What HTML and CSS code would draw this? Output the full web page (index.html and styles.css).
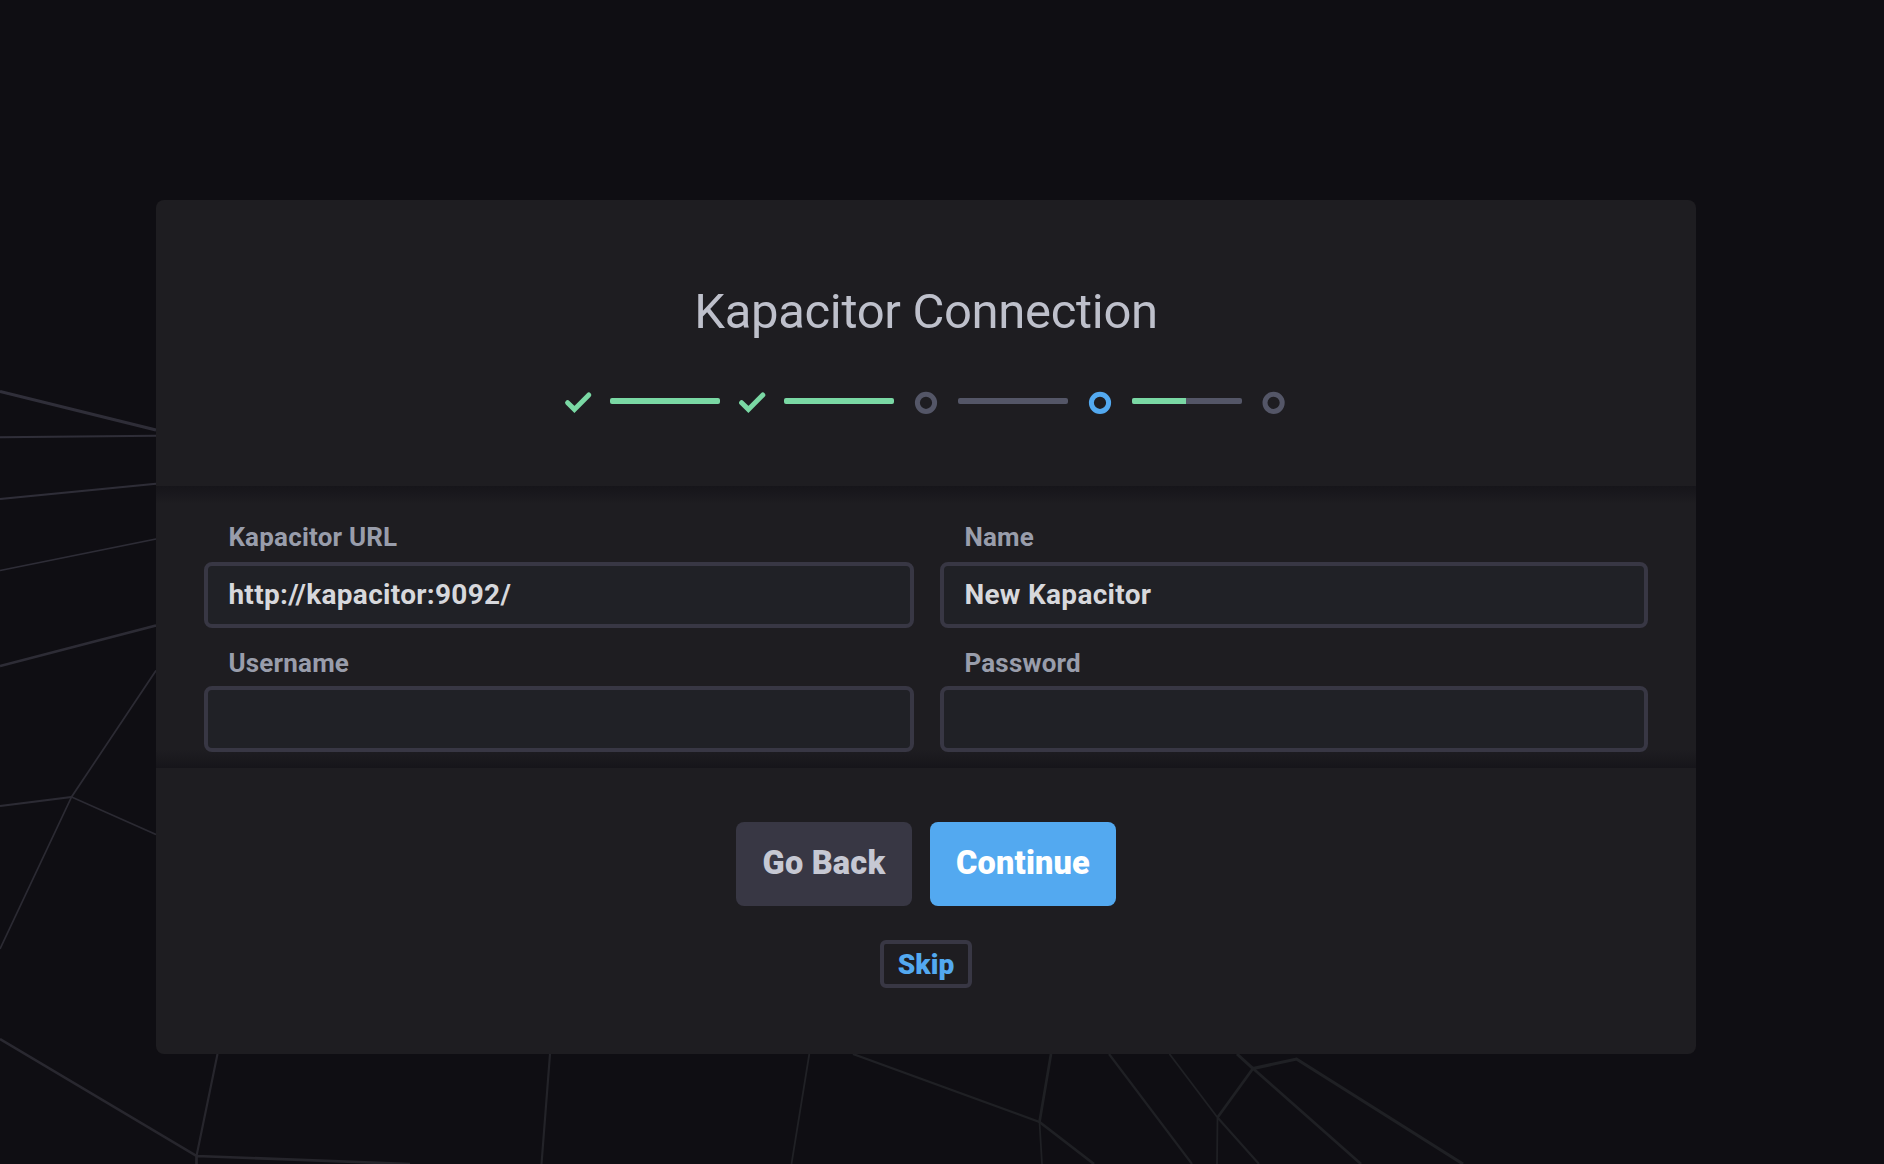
FILE: index.html
```html
<!DOCTYPE html>
<html lang="en">
<head>
<meta charset="utf-8">
<title>Kapacitor Connection</title>
<link rel="stylesheet" href="styles.css">
</head>
<body>
<svg class="backdrop" viewBox="0 0 1884 1164" aria-hidden="true">
  <defs>
    <linearGradient id="web" gradientUnits="userSpaceOnUse" x1="0" y1="400" x2="900" y2="1164">
      <stop offset="0" stop-color="#302f3a"/>
      <stop offset="0.5" stop-color="#27262d"/>
      <stop offset="1" stop-color="#1f2024"/>
    </linearGradient>
  </defs>
  <g fill="none" stroke="url(#web)">
    <path stroke-width="3" d="M0 391.5L156 430M1237 1054L1253 1068.5L1296.5 1059L1463 1164"/>
    <path stroke-width="2.6" d="M0 666L156 625.5M0 1039L196.5 1156V1164M196.5 1156L410 1164M1051 1054L1039.5 1122L1094 1164M1217.5 1117.5L1253 1068.5L1361 1164"/>
    <path stroke-width="2.1" d="M0 437.2L156 435.8M0 499L156 483.7M0 806L71.5 797M217.5 1054L196.5 1156M550 1054L541.5 1164M853 1054L1039.5 1122M1109 1054L1192 1164M1217.5 1117.5L1259 1164"/>
    <path stroke-width="1.7" d="M0 570.5L156 539M156 670.5L71.5 797L156 834.5M71.5 797L0 949M809.3 1054L791.5 1164M1039.5 1122L1042 1164M1169.5 1054L1217.5 1117.5L1217 1164"/>
  </g>
</svg>
<main class="wizard">
  <header class="wizard-header">
    <h1 class="wizard-title">Kapacitor Connection</h1>
    <div class="progress">
      <svg class="step step-done" viewBox="0 0 30 30"><path d="M4.6 14.7L11.4 21.4L25.8 6.9"/></svg>
      <span class="connector"><span class="connector-fill" style="width:100%"></span></span>
      <svg class="step step-done" viewBox="0 0 30 30"><path d="M4.6 14.7L11.4 21.4L25.8 6.9"/></svg>
      <span class="connector"><span class="connector-fill" style="width:100%"></span></span>
      <svg class="step" viewBox="0 0 30 30"><circle cx="15" cy="14.8" r="8.6"/></svg>
      <span class="connector"></span>
      <svg class="step step-current" viewBox="0 0 30 30"><circle cx="15" cy="14.8" r="8.6"/></svg>
      <span class="connector"><span class="connector-fill" style="width:49.1%"></span></span>
      <svg class="step" viewBox="0 0 30 30"><circle cx="14.6" cy="14.8" r="8.6"/></svg>
    </div>
  </header>
  <form class="wizard-form">
    <div class="field">
      <label class="field-label" for="url">Kapacitor URL</label>
      <input class="field-input" id="url" type="text" value="http://kapacitor:9092/">
    </div>
    <div class="field">
      <label class="field-label" for="name">Name</label>
      <input class="field-input" id="name" type="text" value="New Kapacitor">
    </div>
    <div class="field field-compact">
      <label class="field-label" for="username">Username</label>
      <input class="field-input" id="username" type="text">
    </div>
    <div class="field field-compact">
      <label class="field-label" for="password">Password</label>
      <input class="field-input" id="password" type="password">
    </div>
  </form>
  <footer class="wizard-footer">
    <div class="actions">
      <button class="button button-back" type="button">Go Back</button>
      <button class="button button-continue" type="button">Continue</button>
    </div>
    <button class="button-skip" type="button">Skip</button>
  </footer>
</main>
</body>
</html>
```

FILE: styles.css
```css
* {
  box-sizing: border-box;
}

body {
  margin: 0;
  height: 1164px;
  padding: 200px 188px 110px 156px;
  overflow: hidden;
  background: #0f0e13;
  font-family: Roboto, sans-serif;
}

.backdrop {
  position: absolute;
  top: 0;
  left: 0;
  width: 1884px;
  height: 1164px;
}

.wizard {
  position: relative;
  height: 854px;
  display: flex;
  flex-direction: column;
  border-radius: 8px;
  overflow: hidden;
  background: #1e1d21;
}

.wizard-header {
  height: 286px;
  padding-top: 83px;
  display: flex;
  flex-direction: column;
  align-items: center;
}

.wizard-title {
  margin: 0;
  font-size: 49px;
  line-height: 58px;
  font-weight: 400;
  letter-spacing: -0.32px;
  color: #bec0cb;
  white-space: nowrap;
}

.progress {
  display: flex;
  align-items: center;
  gap: 17px;
  margin-top: 47px;
}

.step {
  width: 30px;
  height: 30px;
  fill: none;
  stroke: #545667;
  stroke-width: 5;
}

.step-done {
  stroke: #7ad8a4;
  stroke-linecap: round;
}

.step-current {
  stroke: #53a9f0;
}

.connector {
  width: 110px;
  height: 6px;
  margin-bottom: 4px;
  border-radius: 2px;
  overflow: hidden;
  background: #545667;
}

.connector-fill {
  display: block;
  height: 100%;
  background: #7ad8a4;
}

.wizard-form {
  height: 282px;
  padding: 32px 48px 0;
  display: grid;
  grid-template-columns: 710px 708px;
  grid-template-rows: 110px 110px;
  column-gap: 26px;
  row-gap: 14px;
  background:
    linear-gradient(#16151a, #1e1d2100) top / 100% 18px no-repeat,
    linear-gradient(#1e1d2100, #16151a) bottom / 100% 18px no-repeat;
}

.field {
  display: flex;
  flex-direction: column;
  justify-content: flex-end;
}

.field-label {
  padding-left: 24.4px;
  margin-bottom: 10px;
  font-size: 26px;
  line-height: 30px;
  font-weight: 700;
  letter-spacing: 0.2px;
  color: #999dab;
}

.field-compact .field-label {
  margin-bottom: 8px;
}

.field-input {
  height: 66px;
  padding: 0 20px 2px 20.4px;
  border: 4px solid #383744;
  border-radius: 8px;
  outline: none;
  background: #202126;
  font-family: inherit;
  font-size: 28px;
  font-weight: 700;
  letter-spacing: 0.3px;
  color: #d7d8dc;
}

.wizard-footer {
  padding-top: 54px;
  display: flex;
  flex-direction: column;
  align-items: center;
  gap: 34px;
}

.actions {
  display: flex;
  gap: 18px;
}

.button {
  width: 176px;
  height: 84px;
  padding: 0 0 2px;
  border: 0;
  border-radius: 8px;
  font-family: inherit;
  font-size: 32.5px;
  font-weight: 900;
  letter-spacing: 0.2px;
}

.button-back {
  background: #383744;
  color: #c6c8d3;
}

.button-continue {
  width: 186px;
  background: #53a9f0;
  color: #fff;
}

.button-skip {
  width: 92px;
  height: 48px;
  padding: 0;
  border: 4px solid #383744;
  border-radius: 6px;
  background: none;
  font-family: inherit;
  font-size: 28px;
  font-weight: 900;
  letter-spacing: 0.1px;
  color: #53a9f0;
}
```
